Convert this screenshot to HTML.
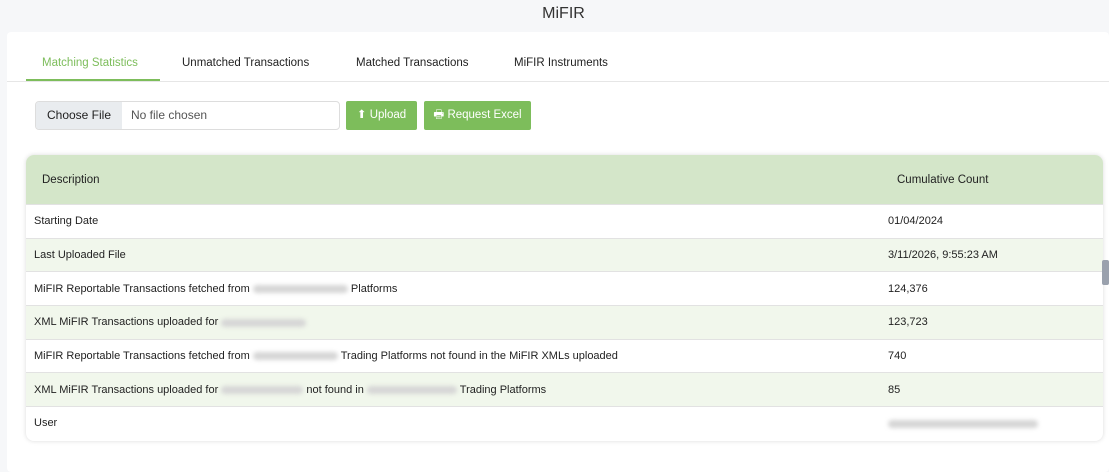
<!DOCTYPE html>
<html><head><style>
*{margin:0;padding:0;box-sizing:border-box}
body{width:1109px;height:465px;background:#f6f7f9;font-family:"Liberation Sans",sans-serif;position:relative;overflow:hidden;color:#222}
.title{position:absolute;top:5px;left:0;width:1109px;text-align:center;font-size:16px;color:#333;padding-left:18px}
.card{position:absolute;left:7px;top:32px;width:1102px;height:440px;background:#fff;border-radius:4px}
.tabs{position:absolute;left:26px;top:57px;font-size:11.5px;color:#222}
.tab{position:absolute;top:0;white-space:nowrap}
.tabline{position:absolute;left:7px;top:81px;width:1102px;height:1px;background:#e6e6e6}
.ul{position:absolute;left:26px;top:79px;width:134px;height:2px;background:#7dbd5b}
.file{position:absolute;left:35px;top:101px;width:305px;height:29px;border:1px solid #ddd;border-radius:4px;font-size:12px;overflow:hidden}
.file .cf{position:absolute;left:0;top:0;width:86px;height:29px;background:#e9ecef;line-height:27px;text-align:center;color:#222}
.file .nf{position:absolute;left:95px;top:0;line-height:27px;color:#555}
.btn{position:absolute;top:101px;height:29px;background:#7dbd5b;color:#fff;font-size:11.5px;line-height:29px;text-align:center;border-radius:2px}
.tbl{position:absolute;left:26px;top:155px;width:1077px;height:286px;border-radius:8px;box-shadow:0 0 5px rgba(0,0,0,.15);overflow:hidden;background:#fff}
.hd{height:49px;background:#d4e6c9;font-size:11.5px;position:relative}
.row{height:33.7px;border-top:1px solid #e2e2e2;font-size:11px;position:relative}
.row:nth-child(odd){background:#f1f7ec}
.c1{position:absolute;left:8px;top:50%;transform:translateY(-50%);white-space:nowrap}
.c2{position:absolute;left:862px;top:50%;transform:translateY(-50%);white-space:nowrap}
.blur{display:inline-block;height:8px;background:#d6d6d6;border-radius:4px;filter:blur(2px);vertical-align:middle}
.sb{position:absolute;left:1102px;top:260px;width:7px;height:25px;background:#9aa1ad;border-radius:2px}
</style></head><body>
<div class="title">MiFIR</div>
<div class="card"></div>
<div class="tabs">
<div class="tab" style="left:16px;color:#7dbd5b">Matching Statistics</div>
<div class="tab" style="left:156px">Unmatched Transactions</div>
<div class="tab" style="left:330px">Matched Transactions</div>
<div class="tab" style="left:488px">MiFIR Instruments</div>
</div>
<div class="tabline"></div><div class="ul"></div>
<div class="file"><div class="cf">Choose File</div><div class="nf">No file chosen</div></div>
<div class="btn" style="left:346px;width:71px">⬆ Upload</div>
<div class="btn" style="left:424px;width:107px">🖶 Request Excel</div>
<div class="tbl">
<div class="hd"><div class="c1" style="left:16px">Description</div><div class="c2" style="left:871px">Cumulative Count</div></div>
<div class="row"><div class="c1">Starting Date</div><div class="c2">01/04/2024</div></div>
<div class="row"><div class="c1">Last Uploaded File</div><div class="c2">3/11/2026, 9:55:23 AM</div></div>
<div class="row"><div class="c1">MiFIR Reportable Transactions fetched from <span class="blur" style="width:95px"></span> Platforms</div><div class="c2">124,376</div></div>
<div class="row"><div class="c1">XML MiFIR Transactions uploaded for <span class="blur" style="width:85px"></span></div><div class="c2">123,723</div></div>
<div class="row"><div class="c1">MiFIR Reportable Transactions fetched from <span class="blur" style="width:85px"></span> Trading Platforms not found in the MiFIR XMLs uploaded</div><div class="c2">740</div></div>
<div class="row"><div class="c1">XML MiFIR Transactions uploaded for <span class="blur" style="width:82px"></span> not found in <span class="blur" style="width:90px"></span> Trading Platforms</div><div class="c2">85</div></div>
<div class="row"><div class="c1">User</div><div class="c2"><span class="blur" style="width:150px"></span></div></div>
</div>
<div class="sb"></div>
</body></html>
